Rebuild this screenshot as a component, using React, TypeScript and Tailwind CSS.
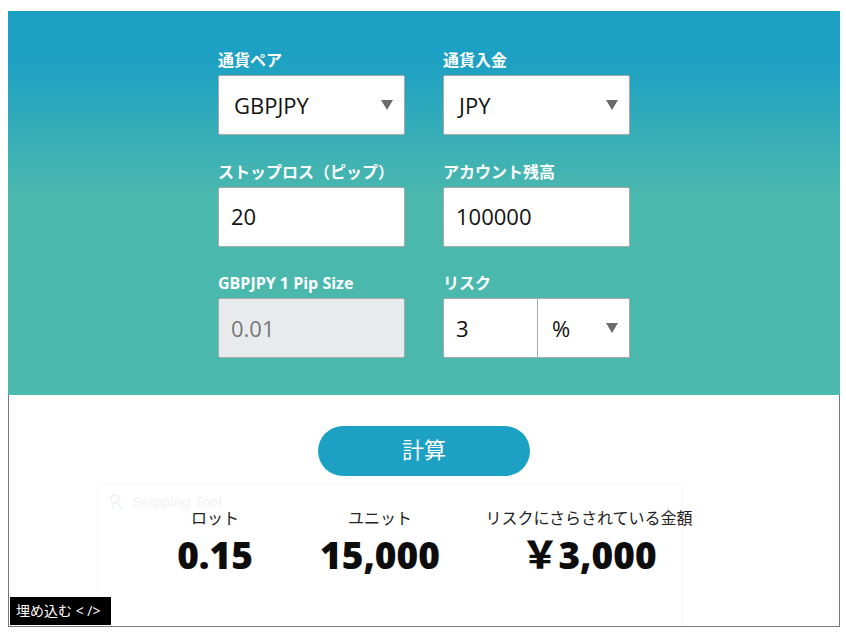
import React from "react";

const FONT = "font-['Open_Sans','Noto_Sans_CJK_JP',sans-serif]";

function Arrow() {
  return (
    <svg width="12" height="10" viewBox="0 0 12 10" className="shrink-0">
      <path d="M0 0 H12 L6 10 Z" fill="#6b6b6b" />
    </svg>
  );
}

function Label({ children }: { children: React.ReactNode }) {
  return (
    <div className="h-[20px] leading-[20px] mb-[5px] text-[16px] font-bold text-white whitespace-nowrap">
      {children}
    </div>
  );
}

function SelectBox({ value }: { value: string }) {
  return (
    <div className="h-[60px] bg-white border border-[#a9a9a9] rounded-[2px] flex items-center justify-between pl-[15px] pr-[11px]">
      <span className="text-[22px] text-[#111]">{value}</span>
      <Arrow />
    </div>
  );
}

function InputBox({ value, disabled }: { value: string; disabled?: boolean }) {
  return (
    <div
      className={
        disabled
          ? "h-[60px] bg-[#e8ebee] border border-[#a9a9a9] rounded-[2px] flex items-center pl-[12px] text-[22px] text-[#777]"
          : "h-[60px] bg-white border border-[#a9a9a9] rounded-[2px] flex items-center pl-[12px] text-[22px] text-[#111]"
      }
    >
      {value}
    </div>
  );
}

export default function App() {
  return (
    <div className={`relative pt-[11px] ${FONT}`}>
      <div className="pointer-events-none absolute left-[97px] top-[483px] w-[586px] h-[156px] border border-b-0 border-[#f8f8f8] shadow-[0_0_3px_rgba(0,0,0,0.02)]">
        <div className="flex items-center gap-[6px] pl-[10px] pt-[7px] text-[15px] text-[#f3f3f3] font-['Liberation_Sans',sans-serif]">
          <svg width="18" height="18" viewBox="0 0 18 18">
            <circle cx="7" cy="6" r="4" fill="none" stroke="#f9ecef" strokeWidth="1.5" />
            <path d="M9 9 L14 16" stroke="#edf2f9" strokeWidth="1.5" />
            <path d="M6 10 L4 16" stroke="#edf2f9" strokeWidth="1.5" />
          </svg>
          <span>Snipping Tool</span>
        </div>
      </div>

      <div className="relative ml-[8px] w-[832px] h-[616px] border-l border-r border-b border-[#777]">
        <section className="-mx-px bg-[linear-gradient(180deg,#1ca0c4_12%,#4bb8ae_48%,#4bb8ae_100%)] pt-[39px] pb-[37px] flex justify-center">
          <div className="grid grid-cols-[187px_187px] gap-x-[38px] gap-y-[26.5px]">
            <div>
              <Label>通貨ペア</Label>
              <SelectBox value="GBPJPY" />
            </div>
            <div>
              <Label>通貨入金</Label>
              <SelectBox value="JPY" />
            </div>
            <div>
              <Label>ストップロス（ピップ）</Label>
              <InputBox value="20" />
            </div>
            <div>
              <Label>アカウント残高</Label>
              <InputBox value="100000" />
            </div>
            <div>
              <Label>GBPJPY 1 Pip Size</Label>
              <InputBox value="0.01" disabled />
            </div>
            <div>
              <Label>リスク</Label>
              <div className="flex h-[60px]">
                <div className="w-[95px] h-[60px] bg-white border border-[#a9a9a9] rounded-l-[2px] flex items-center pl-[12px] text-[22px] text-[#111]">
                  3
                </div>
                <div className="flex-1 h-[60px] bg-white border border-l-0 border-[#a9a9a9] rounded-r-[2px] flex items-center justify-between pl-[14px] pr-[11px]">
                  <span className="text-[22px] text-[#111]">%</span>
                  <Arrow />
                </div>
              </div>
            </div>
          </div>
        </section>

        <div className="flex justify-center mt-[31px]">
          <button className="w-[212px] h-[50px] rounded-full bg-[#1ca0c4] text-white text-[22px] leading-none flex items-center justify-center pb-[4px]">
            計算
          </button>
        </div>

        <div className="flex justify-center mt-[30px]">
          <div className="w-[152px] flex flex-col items-center">
            <div className="text-[16px] leading-[24px] text-[#222]">ロット</div>
            <div className="mt-[3px] text-[37px] leading-[44px] font-extrabold text-[#0d0d0d]">0.15</div>
          </div>
          <div className="w-[178px] flex flex-col items-center">
            <div className="text-[16px] leading-[24px] text-[#222]">ユニット</div>
            <div className="mt-[3px] text-[37px] leading-[44px] font-extrabold text-[#0d0d0d]">15,000</div>
          </div>
          <div className="w-[240px] flex flex-col items-center">
            <div className="text-[16px] leading-[24px] text-[#222] whitespace-nowrap">リスクにさらされている金額</div>
            <div className="mt-[3px] text-[37px] leading-[44px] font-extrabold text-[#0d0d0d] whitespace-nowrap">￥3,000</div>
          </div>
        </div>

        <div className="absolute left-[1px] bottom-[1px] w-[101px] h-[28px] bg-black text-white text-[14px] leading-[28px] pl-[6px] whitespace-nowrap">
          埋め込む &lt; /&gt;
        </div>
      </div>
    </div>
  );
}
